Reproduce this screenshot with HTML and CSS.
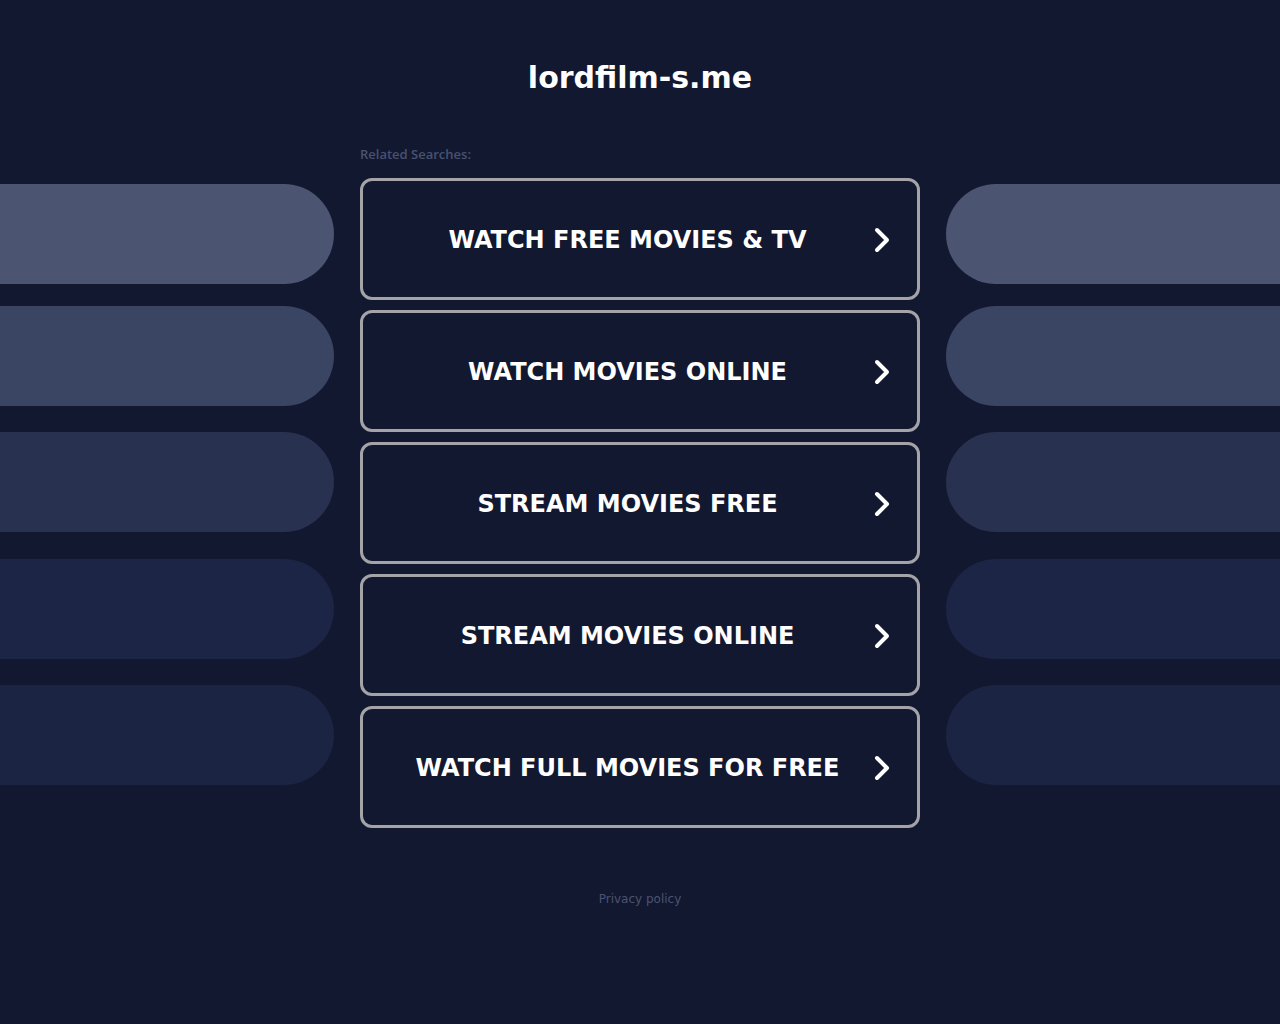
FILE: index.html
```html
<!DOCTYPE html>
<html lang="en">
    <head>
        <meta charset="UTF-8" />
        <meta name="viewport" content="width=device-width, initial-scale=1.0" />
        <title>lordfilm-s.me</title>
        <link rel="stylesheet" href="styles.css">
    </head>
    <body>
        <h1 class="site-title">lordfilm-s.me</h1>

        <div class="layout">
            <div class="pills">
                <div class="pill pill-1"></div>
                <div class="pill pill-2"></div>
                <div class="pill pill-3"></div>
                <div class="pill pill-4"></div>
                <div class="pill pill-5"></div>
            </div>

            <div class="searches">
                <p class="searches-label">Related Searches:</p>
                <a class="search-btn" href="#">
                    <span class="search-text">WATCH FREE MOVIES &amp; TV</span>
                    <svg class="chevron" viewBox="0 0 20 28"><path d="M5 4 L15 14 L5 24" /></svg>
                </a>
                <a class="search-btn" href="#">
                    <span class="search-text">WATCH MOVIES ONLINE</span>
                    <svg class="chevron" viewBox="0 0 20 28"><path d="M5 4 L15 14 L5 24" /></svg>
                </a>
                <a class="search-btn" href="#">
                    <span class="search-text">STREAM MOVIES FREE</span>
                    <svg class="chevron" viewBox="0 0 20 28"><path d="M5 4 L15 14 L5 24" /></svg>
                </a>
                <a class="search-btn" href="#">
                    <span class="search-text">STREAM MOVIES ONLINE</span>
                    <svg class="chevron" viewBox="0 0 20 28"><path d="M5 4 L15 14 L5 24" /></svg>
                </a>
                <a class="search-btn" href="#">
                    <span class="search-text">WATCH FULL MOVIES FOR FREE</span>
                    <svg class="chevron" viewBox="0 0 20 28"><path d="M5 4 L15 14 L5 24" /></svg>
                </a>
            </div>

            <div class="pills pills-right">
                <div class="pill pill-1"></div>
                <div class="pill pill-2"></div>
                <div class="pill pill-3"></div>
                <div class="pill pill-4"></div>
                <div class="pill pill-5"></div>
            </div>
        </div>

        <footer class="footer">
            <a href="#">Privacy policy</a>
        </footer>
    </body>
</html>
```

FILE: styles.css
```css
body {
    margin: 0;
    padding: 0;
    background-color: #121830;
    font-family: 'DejaVu Sans', sans-serif;
    color: #fff;
}

.site-title {
    margin: 0;
    padding-top: 59px;
    font-size: 30px;
    line-height: 38px;
    font-weight: bold;
    text-align: center;
    color: #fff;
}

.layout {
    display: grid;
    grid-template-columns: 1fr 560px 1fr;
    column-gap: 26px;
    margin-top: 49px;
}

.pills {
    display: flex;
    flex-direction: column;
    padding-top: 38px;
}

.pill {
    height: 100px;
    border-radius: 0 50px 50px 0;
}

.pills-right .pill {
    border-radius: 50px 0 0 50px;
}

.pill-1 {
    background-color: #4b5571;
}

.pill-2 {
    margin-top: 22px;
    background-color: #3a4463;
}

.pill-3 {
    margin-top: 26px;
    background-color: #283150;
}

.pill-4 {
    margin-top: 27px;
    background-color: #1c2545;
}

.pill-5 {
    margin-top: 26px;
    background-color: #1b2443;
}

.searches {
    display: flex;
    flex-direction: column;
    gap: 10px;
}

.searches-label {
    margin: 0 0 6px 0;
    font-family: 'Open Sans', sans-serif;
    font-size: 13px;
    font-weight: 600;
    line-height: 15px;
    padding-top: 1px;
    color: #48526f;
}

.search-btn {
    box-sizing: border-box;
    height: 122px;
    display: flex;
    align-items: center;
    padding: 0 25px 0 20px;
    border: 3px solid #a3a3a8;
    border-radius: 12px;
    text-decoration: none;
    color: #fff;
}

.search-text {
    flex: 1;
    padding-top: 2px;
    text-align: center;
    font-size: 24px;
    font-weight: bold;
}

.chevron {
    width: 20px;
    height: 28px;
    margin-top: 1px;
    fill: none;
    stroke: #fff;
    stroke-width: 4;
    stroke-linecap: round;
    stroke-linejoin: round;
}

.footer {
    margin-top: 60px;
    text-align: center;
}

.footer a {
    font-size: 12px;
    color: #4a5370;
    text-decoration: none;
}
```
